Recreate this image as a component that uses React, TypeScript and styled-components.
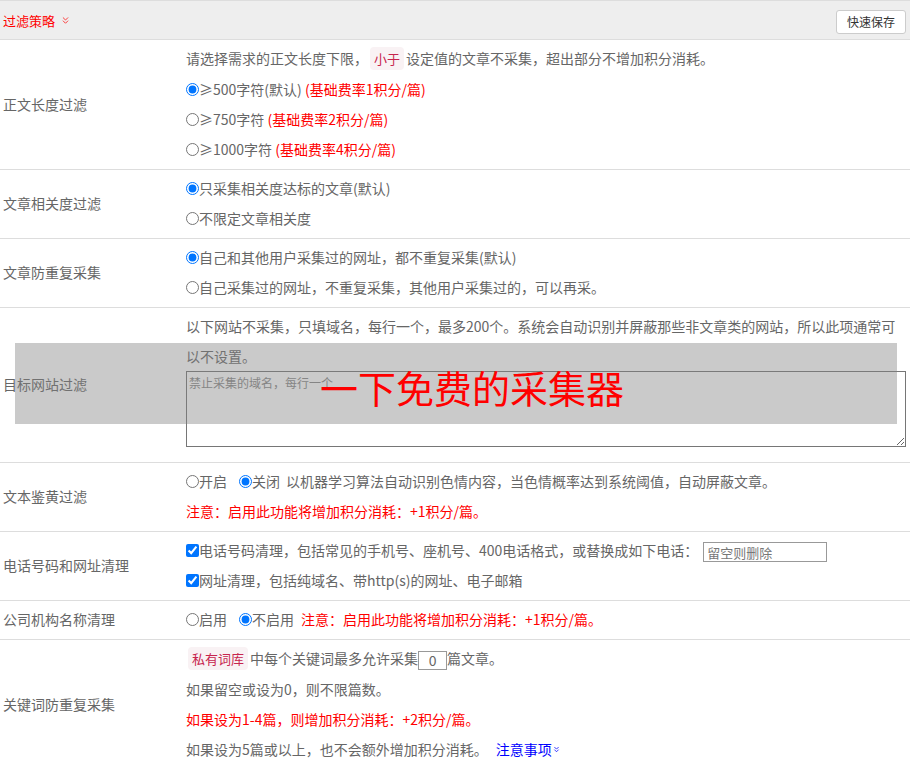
import { ReactNode } from 'react'
import styled, { createGlobalStyle } from 'styled-components'
import { ChevronsDown } from 'lucide-react'

const GlobalStyle = createGlobalStyle`
  body {
    margin: 0;
    background: #fff;
    font-family: 'Noto Sans CJK SC', 'Liberation Sans', sans-serif;
    font-size: 14px;
    color: #666;
  }
`

interface RowProps {
  label: string
  children: ReactNode
  overlay?: ReactNode
}

const Row = ({ label, children, overlay }: RowProps) => (
  <RowContainer>
    <LabelCell>{label}</LabelCell>
    <ContentCell>{children}</ContentCell>
    {overlay}
  </RowContainer>
)

interface ChoiceProps {
  type?: 'radio' | 'checkbox'
  name: string
  checked?: boolean
  children: ReactNode
}

const Choice = ({ type = 'radio', name, checked, children }: ChoiceProps) => (
  <ChoiceLabel>
    <ChoiceInput type={type} name={name} defaultChecked={checked} />
    {children}
  </ChoiceLabel>
)

const App = () => {
  return (
    <>
      <GlobalStyle />
      <Page>
        <HeaderBar>
          <HeaderTitle>
            过滤策略
            <ChevronsDown size={11} strokeWidth={1.6} />
          </HeaderTitle>
          <SaveButton>快速保存</SaveButton>
        </HeaderBar>

        <Row label="正文长度过滤">
          <Line>
            请选择需求的正文长度下限，<Code>小于</Code>设定值的文章不采集，超出部分不增加积分消耗。
          </Line>
          <Line>
            <Choice name="len" checked>≥500字符(默认)</Choice> <Red>(基础费率1积分/篇)</Red>
          </Line>
          <Line>
            <Choice name="len">≥750字符</Choice> <Red>(基础费率2积分/篇)</Red>
          </Line>
          <Line>
            <Choice name="len">≥1000字符</Choice> <Red>(基础费率4积分/篇)</Red>
          </Line>
        </Row>

        <Row label="文章相关度过滤">
          <Line>
            <Choice name="rel" checked>只采集相关度达标的文章(默认)</Choice>
          </Line>
          <Line>
            <Choice name="rel">不限定文章相关度</Choice>
          </Line>
        </Row>

        <Row label="文章防重复采集">
          <Line>
            <Choice name="dup" checked>自己和其他用户采集过的网址，都不重复采集(默认)</Choice>
          </Line>
          <Line>
            <Choice name="dup">自己采集过的网址，不重复采集，其他用户采集过的，可以再采。</Choice>
          </Line>
        </Row>

        <Row
          label="目标网站过滤"
          overlay={
            <Watermark>
              <WatermarkText>一下免费的采集器</WatermarkText>
            </Watermark>
          }
        >
          <Line>
            以下网站不采集，只填域名，每行一个，最多200个。系统会自动识别并屏蔽那些非文章类的网站，所以此项通常可以不设置。
          </Line>
          <DomainArea placeholder="禁止采集的域名，每行一个" />
        </Row>

        <Row label="文本鉴黄过滤">
          <Line>
            <Choice name="porn">开启</Choice>
            <Choice name="porn" checked>关闭</Choice>
            <Hint>以机器学习算法自动识别色情内容，当色情概率达到系统阈值，自动屏蔽文章。</Hint>
          </Line>
          <Line>
            <Red>注意：启用此功能将增加积分消耗：+1积分/篇。</Red>
          </Line>
        </Row>

        <Row label="电话号码和网址清理">
          <Line>
            <Choice type="checkbox" name="phone" checked>
              电话号码清理，包括常见的手机号、座机号、400电话格式，或替换成如下电话：
            </Choice>
            <PhoneInput placeholder="留空则删除" />
          </Line>
          <Line>
            <Choice type="checkbox" name="url" checked>
              网址清理，包括纯域名、带http(s)的网址、电子邮箱
            </Choice>
          </Line>
        </Row>

        <Row label="公司机构名称清理">
          <Line>
            <Choice name="corp">启用</Choice>
            <Choice name="corp" checked>不启用</Choice>
            <Red $gap={7}>注意：启用此功能将增加积分消耗：+1积分/篇。</Red>
          </Line>
        </Row>

        <Row label="关键词防重复采集">
          <Line>
            <Code>私有词库</Code>中每个关键词最多允许采集<CountInput defaultValue="0" />篇文章。
          </Line>
          <Line>如果留空或设为0，则不限篇数。</Line>
          <Line>
            <Red>如果设为1-4篇，则增加积分消耗：+2积分/篇。</Red>
          </Line>
          <Line>
            如果设为5篇或以上，也不会额外增加积分消耗。
            <NoteLink>
              注意事项
              <ChevronsDown size={9} strokeWidth={2} />
            </NoteLink>
          </Line>
        </Row>
      </Page>
    </>
  )
}

const Page = styled.div`
  width: 910px;
`

const HeaderBar = styled.div`
  height: 38px;
  display: flex;
  align-items: center;
  justify-content: space-between;
  padding: 0 4px 0 3px;
  background: #eeeeee;
  border-top: 1px solid #dddddd;
  border-bottom: 1px solid #dddddd;
`

const HeaderTitle = styled.div`
  display: flex;
  align-items: center;
  gap: 5px;
  color: #ff0000;
  font-size: 13px;
  svg {
    margin-top: 1px;
  }
`

const SaveButton = styled.button`
  height: 24px;
  width: 70px;
  padding: 0;
  margin-top: 3px;
  background: #fff;
  border: 1px solid #cccccc;
  border-radius: 3px;
  font-family: inherit;
  font-size: 12px;
  color: #333;
`

const RowContainer = styled.div`
  position: relative;
  display: grid;
  grid-template-columns: 186px 1fr;
  padding: 3px 4px 5px 0;
  border-bottom: 1px solid #dddddd;
`

const LabelCell = styled.div`
  display: flex;
  align-items: center;
  padding-left: 3px;
  color: #666;
`

const ContentCell = styled.div`
  display: flex;
  flex-direction: column;
`

const Line = styled.div`
  line-height: 30px;
  min-height: 30px;
  display: block;
`

const ChoiceLabel = styled.label`
  margin-right: 12px;
  white-space: nowrap;
  &:last-of-type {
    margin-right: 0;
  }
`

const ChoiceInput = styled.input`
  margin: 0;
  width: 13px;
  height: 13px;
  vertical-align: -1px;
`

const Red = styled.span<{ $gap?: number }>`
  color: #ff0000;
  margin-left: ${(p) => p.$gap ?? 0}px;
`

const Hint = styled.span`
  margin-left: 6px;
`

const Code = styled.span`
  padding: 2px 4px;
  margin: 0 2px;
  background: #f9f2f4;
  color: #c7254e;
  border-radius: 4px;
  font-size: 13px;
`

const DomainArea = styled.textarea`
  display: block;
  box-sizing: border-box;
  width: 720px;
  height: 76px;
  margin: 0 0 10px;
  padding: 2px;
  border: 1px solid #767676;
  font-family: inherit;
  font-size: 12px;
  color: #333;
  &::placeholder {
    color: #888;
  }
`

const PhoneInput = styled.input`
  box-sizing: border-box;
  width: 124px;
  height: 20px;
  margin-left: 5px;
  padding: 0 3px;
  border: 1px solid #999;
  font-family: inherit;
  font-size: 13px;
  vertical-align: middle;
  &::placeholder {
    color: #777;
  }
`

const CountInput = styled.input`
  box-sizing: border-box;
  width: 29px;
  height: 19px;
  padding: 0;
  border: 1px solid #999;
  text-align: center;
  font-family: inherit;
  font-size: 14px;
  color: #666;
  vertical-align: middle;
`

const NoteLink = styled.a`
  margin-left: 8px;
  color: #0000ff;
  cursor: pointer;
  svg {
    vertical-align: 1px;
  }
`

const Watermark = styled.div`
  position: absolute;
  left: 15px;
  top: 35px;
  width: 882px;
  height: 81px;
  background: rgba(128, 128, 128, 0.42);
  display: flex;
  align-items: center;
  justify-content: center;
  padding-left: 32px;
  box-sizing: border-box;
  pointer-events: none;
`

const WatermarkText = styled.span`
  color: #ff0000;
  font-size: 38px;
  line-height: 1;
  margin-top: 6px;
`

export default App
